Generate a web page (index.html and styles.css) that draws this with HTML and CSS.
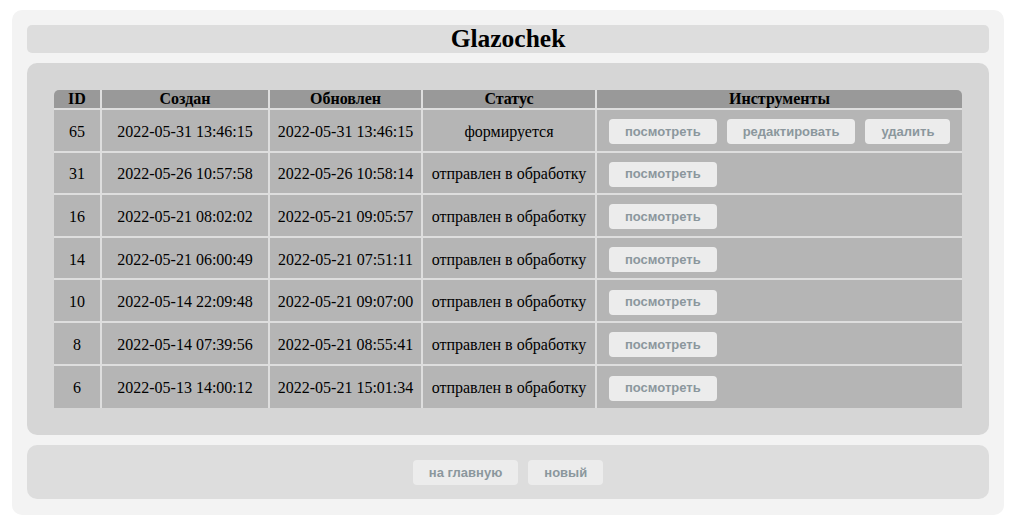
FILE: index.html
```html
<!DOCTYPE html>
<html lang="ru">
<head>
<meta charset="utf-8">
<title>Glazochek</title>
<link rel="stylesheet" href="styles.css">
</head>
<body>
<div class="page">
  <header class="title-bar"><h1 class="title">Glazochek</h1></header>
  <main class="panel">
    <table class="orders">
      <colgroup>
        <col class="c-id"><col class="c-created"><col class="c-updated"><col class="c-status"><col class="c-tools">
      </colgroup>
      <thead>
        <tr><th>ID</th><th>Создан</th><th>Обновлен</th><th>Статус</th><th>Инструменты</th></tr>
      </thead>
      <tbody>
        <tr><td>65</td><td>2022-05-31 13:46:15</td><td>2022-05-31 13:46:15</td><td>формируется</td>
          <td class="tools"><div class="btns"><a class="btn">посмотреть</a><a class="btn">редактировать</a><a class="btn">удалить</a></div></td></tr>
        <tr><td>31</td><td>2022-05-26 10:57:58</td><td>2022-05-26 10:58:14</td><td>отправлен в обработку</td>
          <td class="tools"><div class="btns"><a class="btn">посмотреть</a></div></td></tr>
        <tr><td>16</td><td>2022-05-21 08:02:02</td><td>2022-05-21 09:05:57</td><td>отправлен в обработку</td>
          <td class="tools"><div class="btns"><a class="btn">посмотреть</a></div></td></tr>
        <tr><td>14</td><td>2022-05-21 06:00:49</td><td>2022-05-21 07:51:11</td><td>отправлен в обработку</td>
          <td class="tools"><div class="btns"><a class="btn">посмотреть</a></div></td></tr>
        <tr><td>10</td><td>2022-05-14 22:09:48</td><td>2022-05-21 09:07:00</td><td>отправлен в обработку</td>
          <td class="tools"><div class="btns"><a class="btn">посмотреть</a></div></td></tr>
        <tr><td>8</td><td>2022-05-14 07:39:56</td><td>2022-05-21 08:55:41</td><td>отправлен в обработку</td>
          <td class="tools"><div class="btns"><a class="btn">посмотреть</a></div></td></tr>
        <tr><td>6</td><td>2022-05-13 14:00:12</td><td>2022-05-21 15:01:34</td><td>отправлен в обработку</td>
          <td class="tools"><div class="btns"><a class="btn">посмотреть</a></div></td></tr>
      </tbody>
    </table>
  </main>
  <footer class="footer">
    <a class="btn">на главную</a><a class="btn">новый</a>
  </footer>
</div>
</body>
</html>
```

FILE: styles.css
```css
html, body {
  margin: 0;
  padding: 0;
  background: #ffffff;
}
body {
  padding: 10px 12px 9px;
  font-family: "Liberation Serif", "Times New Roman", serif;
  color: #000;
}
.page {
  background: #f3f3f3;
  border-radius: 10px;
  padding: 15px 15px 16px;
  display: flex;
  flex-direction: column;
  gap: 10px;
}
.title-bar {
  background: #dddddd;
  border-radius: 5px;
  height: 28px;
  display: flex;
  align-items: center;
  justify-content: center;
}
.title {
  margin: 0;
  font-size: 25.5px;
  line-height: 28px;
  font-weight: bold;
}
.panel {
  background: #d6d6d6;
  border-radius: 10px;
  padding: 27px;
}
.orders {
  width: 100%;
  border-collapse: separate;
  border-spacing: 0;
  table-layout: fixed;
  font-size: 16px;
}
.c-id { width: 48px; }
.c-created { width: 168px; }
.c-updated { width: 153px; }
.c-status { width: 174px; }
.c-tools { width: auto; }
.orders th, .orders td {
  border-right: 2px solid #dedede;
  border-bottom: 2px solid #dedede;
  text-align: center;
  padding: 0;
  white-space: nowrap;
}
.orders th:last-child, .orders td:last-child { border-right: none; }
.orders tbody tr:last-child td { border-bottom: none; }
.orders th {
  background: #999999;
  height: 18px;
  line-height: 18px;
  font-size: 16px;
  font-weight: bold;
}
.orders th:first-child { border-top-left-radius: 5px; }
.orders th:last-child { border-top-right-radius: 5px; }
.orders td {
  background: #b5b5b5;
  height: 42.6px;
  line-height: 18px;
  padding-top: 3px;
  box-sizing: border-box;
}
.orders td.tools {
  text-align: left;
  padding: 3px 12px 0;
}
.btns {
  display: flex;
  gap: 10px;
}
.btn {
  display: inline-flex;
  align-items: center;
  justify-content: center;
  height: 25px;
  padding: 0 16px;
  background: #ececec;
  border-radius: 4px;
  color: #8b979d;
  font-family: "Liberation Sans", Arial, sans-serif;
  font-weight: bold;
  font-size: 13px;
  text-decoration: none;
  box-sizing: border-box;
}
.footer {
  background: #dddddd;
  border-radius: 10px;
  height: 54px;
  display: flex;
  align-items: center;
  justify-content: center;
  gap: 10px;
}
```
